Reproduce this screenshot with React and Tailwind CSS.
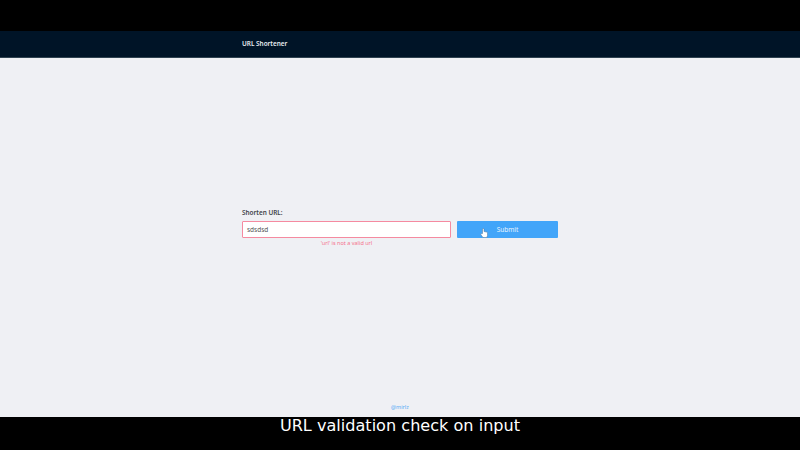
function HandCursor() {
  return (
    <svg className="absolute left-[23px] top-[7px] h-[10px] w-[8px]" viewBox="0 0 16 20">
      <path
        d="M5 11V2.500a1.500 1.500 0 0 1 3 0V7l5.500 1.200a2 2 0 0 1 1.500 2V15l-1.500 4H6l-4.500-6c-.6-1.500 1-2.500 2-1.500z"
        fill="#fff"
        stroke="#4c7296"
        strokeWidth="1"
        strokeLinejoin="round"
      />
    </svg>
  );
}

export default function App() {
  return (
    <div className="flex h-[450px] w-[800px] flex-col overflow-hidden bg-black pt-[31px] font-['Noto_Sans',sans-serif]">
      <header className="h-[27px] shrink-0 border-b border-[#304351] bg-[#001427] pl-[242px]">
        <h1 className="text-[6.400px] leading-[25px] font-semibold text-[#e9eef2]">URL Shortener</h1>
      </header>
      <main className="flex h-[359px] shrink-0 flex-col bg-[#eff0f4]">
        <form className="ml-[242px] w-[316px] pt-[149px]">
          <label className="block h-[14px] text-[6.400px] leading-[11px] font-semibold text-[#414449]">Shorten URL:</label>
          <div className="flex gap-[6px]">
            <div className="w-[209px]">
              <div className="h-[17px] rounded-[1px] border border-[#f58aa0] bg-white pl-1 text-[6.500px] leading-[16px] text-[#555]">
                sdsdsd
              </div>
              <p className="text-center text-[5.500px] leading-[10px] text-[#f5728b]">'url' is not a valid url</p>
            </div>
            <div className="relative h-[17px] w-[101px] rounded-[1px] bg-[#42a5f9] text-center text-[6.500px] leading-[18px] text-[#e5f4ff]">
              Submit
              <HandCursor />
            </div>
          </div>
        </form>
        <footer className="mt-auto h-[15px] text-center text-[5.500px] leading-[10px] text-[#58aaf4]">@mirlz</footer>
      </main>
      <p className="-mt-px text-center font-['DejaVu_Sans',sans-serif] text-[16.100px] leading-[20px] whitespace-nowrap text-white [text-shadow:0_0_1px_#000,1px_1px_0_#000,-1px_-1px_0_#000]">
        URL validation check on input
      </p>
    </div>
  );
}
